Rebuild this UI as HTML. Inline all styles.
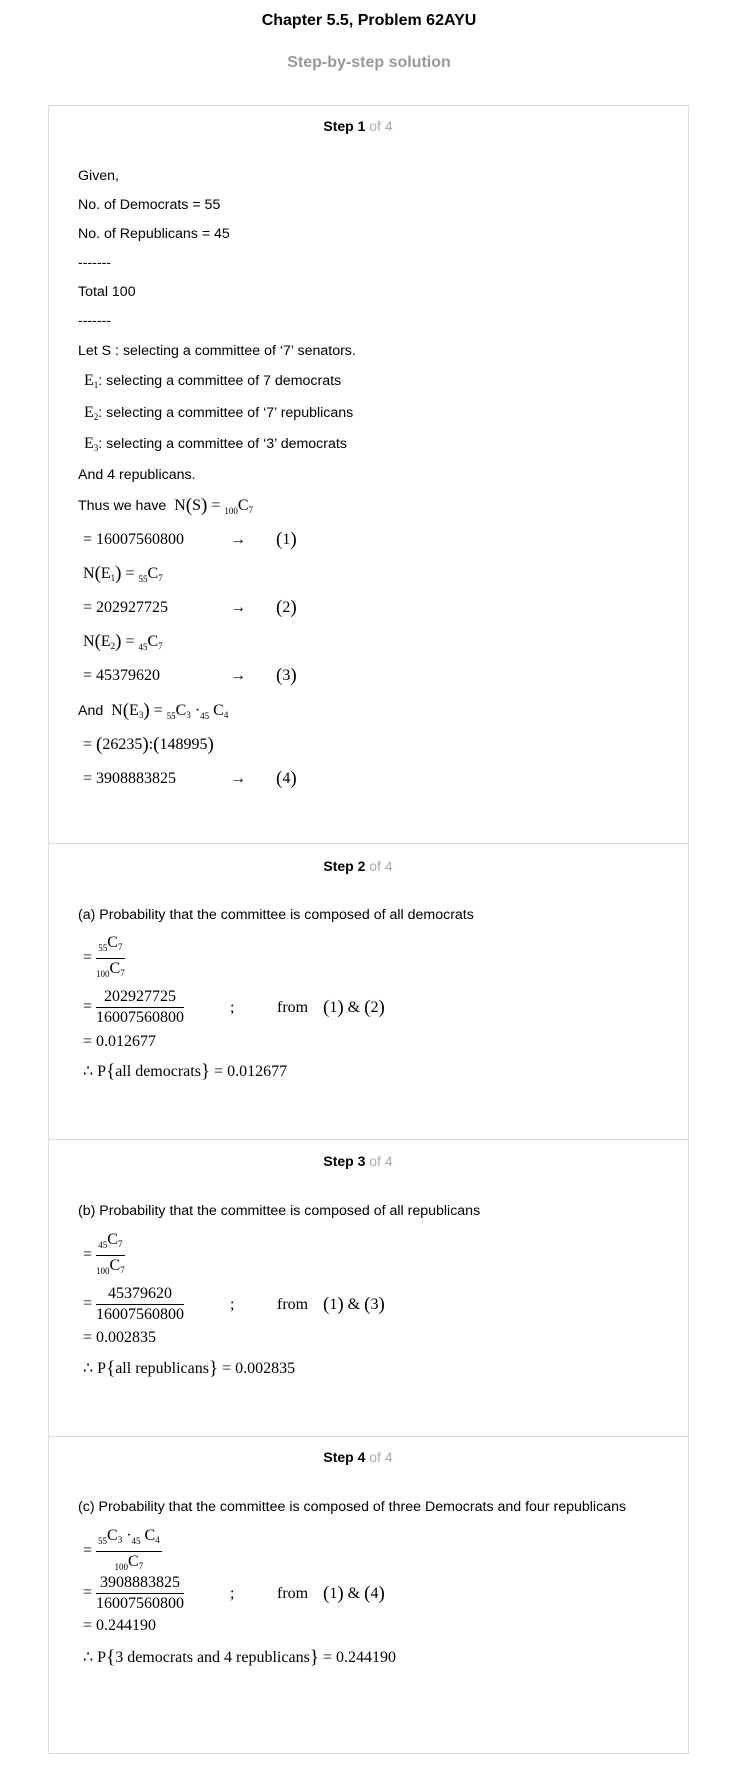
<!DOCTYPE html><html><head><meta charset="utf-8"><style>
body{margin:0;width:738px;height:1784px;background:#fff;position:relative;font-family:"Liberation Sans",sans-serif;color:#000}
.a{position:absolute;white-space:nowrap;line-height:20px}
.t{font-size:14.2px;left:78px}
.m{font-family:"Liberation Serif",serif;font-size:16px;left:83px}
.c{left:0;width:738px;text-align:center}
.h{font-size:14px;font-weight:bold;left:-11px}
.h span{color:#aaa;font-weight:normal}
.box{position:absolute;left:48px;width:641px;top:105px;height:1649px;border:1px solid #ddd;box-sizing:border-box}
.hr{position:absolute;left:48px;width:641px;height:1px;background:#ddd}
sub{font-size:9px;vertical-align:-3px}
.s{font-size:9px;vertical-align:-4px}
.fr{display:inline-block;vertical-align:middle;text-align:center;line-height:20px}
.fr .n{border-bottom:1px solid #000;padding:0 2px}
.p{font-size:19px;vertical-align:-1px;font-weight:lighter}
</style></head><body>
<div class="a c" style="top:11px;font-size:16px;font-weight:bold">Chapter 5.5, Problem 62AYU</div>
<div class="a c" style="top:53px;font-size:16px;font-weight:bold;color:#999">Step-by-step solution</div>
<div class="box"></div>
<div class="hr" style="top:843px"></div>
<div class="hr" style="top:1139px"></div>
<div class="hr" style="top:1436px"></div>

<div class="a c h" style="top:116px">Step 1 <span>of 4</span></div>
<div class="a t" style="top:166px">Given,</div>
<div class="a t" style="top:195px">No. of Democrats = 55</div>
<div class="a t" style="top:224px">No. of Republicans = 45</div>
<div class="a t" style="top:253px">-------</div>
<div class="a t" style="top:282px">Total 100</div>
<div class="a t" style="top:311px">-------</div>
<div class="a t" style="top:341px">Let S : selecting a committee of ‘7’ senators.</div>
<div class="a t" style="top:371px;left:84px"><span style="font-family:'Liberation Serif';font-size:16px">E<sub>1</sub></span>: selecting a committee of 7 democrats</div>
<div class="a t" style="top:403px;left:84px"><span style="font-family:'Liberation Serif';font-size:16px">E<sub>2</sub></span>: selecting a committee of ‘7’ republicans</div>
<div class="a t" style="top:434px;left:84px"><span style="font-family:'Liberation Serif';font-size:16px">E<sub>3</sub></span>: selecting a committee of ‘3’ democrats</div>
<div class="a t" style="top:465px">And 4 republicans.</div>
<div class="a t" style="top:496px">Thus we have &nbsp;<span style="font-family:'Liberation Serif';font-size:16px">N<span class="p">(</span>S<span class="p">)</span> = <span class="s">100</span>C<sub>7</sub></span></div>
<div class="a m" style="top:530px">= 16007560800</div><div class="a m" style="top:530px;left:230px">→</div><div class="a m" style="top:530px;left:276px"><span class="p">(</span>1<span class="p">)</span></div>
<div class="a m" style="top:564px">N<span class="p">(</span>E<sub>1</sub><span class="p">)</span> = <span class="s">55</span>C<sub>7</sub></div>
<div class="a m" style="top:598px">= 202927725</div><div class="a m" style="top:598px;left:230px">→</div><div class="a m" style="top:598px;left:276px"><span class="p">(</span>2<span class="p">)</span></div>
<div class="a m" style="top:632px">N<span class="p">(</span>E<sub>2</sub><span class="p">)</span> = <span class="s">45</span>C<sub>7</sub></div>
<div class="a m" style="top:666px">= 45379620</div><div class="a m" style="top:666px;left:230px">→</div><div class="a m" style="top:666px;left:276px"><span class="p">(</span>3<span class="p">)</span></div>
<div class="a t" style="top:701px">And &nbsp;<span style="font-family:'Liberation Serif';font-size:16px">N<span class="p">(</span>E<sub>3</sub><span class="p">)</span> = <span class="s">55</span>C<sub>3</sub> ·<span class="s">45</span> C<sub>4</sub></span></div>
<div class="a m" style="top:735px">= <span class="p">(</span>26235<span class="p">)</span>:<span class="p">(</span>148995<span class="p">)</span></div>
<div class="a m" style="top:769px">= 3908883825</div><div class="a m" style="top:769px;left:230px">→</div><div class="a m" style="top:769px;left:276px"><span class="p">(</span>4<span class="p">)</span></div>

<div class="a c h" style="top:856px">Step 2 <span>of 4</span></div>
<div class="a t" style="top:905px">(a) Probability that the committee is composed of all democrats</div>
<div class="a m" style="top:933px">= <span class="fr"><div class="n"><span class="s">55</span>C<sub>7</sub></div><div><span class="s">100</span>C<sub>7</sub></div></span></div>
<div class="a m" style="top:987px">= <span class="fr"><div class="n">202927725</div><div>16007560800</div></span></div>
<div class="a m" style="top:998px;left:230px">;</div><div class="a m" style="top:998px;left:277px">from</div><div class="a m" style="top:998px;left:323px"><span class="p">(</span>1<span class="p">)</span> &amp; <span class="p">(</span>2<span class="p">)</span></div>
<div class="a m" style="top:1032px">= 0.012677</div>
<div class="a m" style="top:1062px">∴ P<span class="p">{</span>all democrats<span class="p">}</span> = 0.012677</div>

<div class="a c h" style="top:1151px">Step 3 <span>of 4</span></div>
<div class="a t" style="top:1201px">(b) Probability that the committee is composed of all republicans</div>
<div class="a m" style="top:1230px">= <span class="fr"><div class="n"><span class="s">45</span>C<sub>7</sub></div><div><span class="s">100</span>C<sub>7</sub></div></span></div>
<div class="a m" style="top:1284px">= <span class="fr"><div class="n">45379620</div><div>16007560800</div></span></div>
<div class="a m" style="top:1295px;left:230px">;</div><div class="a m" style="top:1295px;left:277px">from</div><div class="a m" style="top:1295px;left:323px"><span class="p">(</span>1<span class="p">)</span> &amp; <span class="p">(</span>3<span class="p">)</span></div>
<div class="a m" style="top:1328px">= 0.002835</div>
<div class="a m" style="top:1359px">∴ P<span class="p">{</span>all republicans<span class="p">}</span> = 0.002835</div>

<div class="a c h" style="top:1447px">Step 4 <span>of 4</span></div>
<div class="a t" style="top:1497px">(c) Probability that the committee is composed of three Democrats and four republicans</div>
<div class="a m" style="top:1526px">= <span class="fr"><div class="n"><span class="s">55</span>C<sub>3</sub> ·<span class="s">45</span> C<sub>4</sub></div><div><span class="s">100</span>C<sub>7</sub></div></span></div>
<div class="a m" style="top:1573px">= <span class="fr"><div class="n">3908883825</div><div>16007560800</div></span></div>
<div class="a m" style="top:1584px;left:230px">;</div><div class="a m" style="top:1584px;left:277px">from</div><div class="a m" style="top:1584px;left:323px"><span class="p">(</span>1<span class="p">)</span> &amp; <span class="p">(</span>4<span class="p">)</span></div>
<div class="a m" style="top:1616px">= 0.244190</div>
<div class="a m" style="top:1648px">∴ P<span class="p">{</span>3 democrats and 4 republicans<span class="p">}</span> = 0.244190</div>
</body></html>
